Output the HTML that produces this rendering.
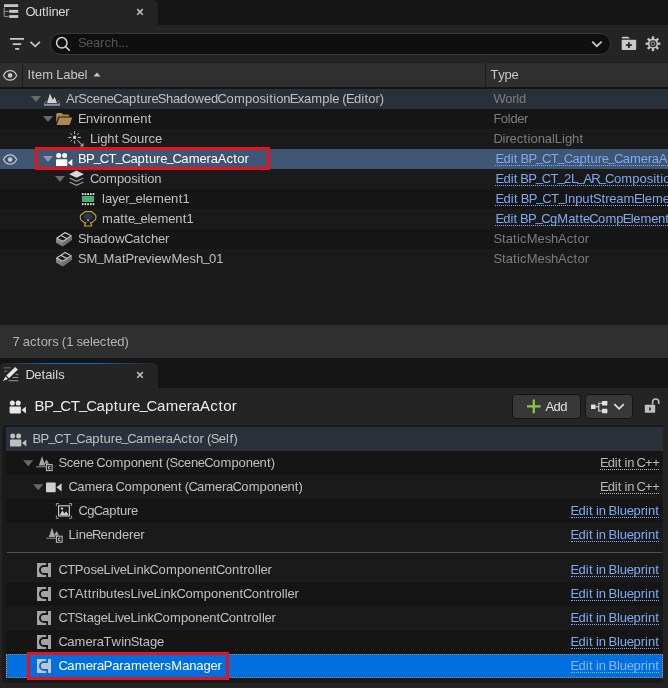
<!DOCTYPE html>
<html>
<head>
<meta charset="utf-8">
<style>
*{box-sizing:border-box;margin:0;padding:0}
html,body{width:668px;height:688px;overflow:hidden;background:#151515;font-family:"Liberation Sans",sans-serif;}
body{position:relative;color:#c0c0c0;font-size:13px;}
.abs{position:absolute}
.t{position:absolute;white-space:nowrap;line-height:16px;height:16px;transform-origin:0 50%}
.tr{position:absolute;white-space:nowrap;line-height:16px;height:16px;transform-origin:100% 50%}
svg{position:absolute;overflow:visible}
.k0{margin:0 -0.0152em;}
.k1{margin:0 0.0043em;}
.k2{margin:0 0.0034em;}
.k3{margin:0 -0.0086em;}
.k4{margin:0 -0.0074em;}
.k5{margin:0 0.0026em;}
.k6{margin:0 0.0026em;}
.k7{margin:0 0.0026em;}
.k8{margin:0 0.0026em;}
.k9{margin:0 -0.0073em;}
.k10{margin:0 -0.0222em;}
.k11{margin:0 -0.0357em;}
.k12{margin:0 -0.0332em;}
.k13{margin:0 -0.0493em;}
.k14{margin:0 -0.0291em;}
.k15{margin:0 -0.0030em;}
.k16{margin:0 -0.0091em;}
.k17{margin:0 0.0200em;}
.k18{margin:0 -0.0452em;}
.k19{margin:0 -0.0181em;}
.k20{margin:0 -0.0532em;}
.k21{margin:0 -0.0369em;}
.k22{margin:0 -0.0071em;}
.k23{margin:0 -0.0283em;}
.k24{margin:0 -0.0525em;position:relative;top:-0.11em;}
.k25{margin:0 -0.0062em;}
.k26{margin:0 0.0024em;}
.k27{margin:0 0.0117em;}
.k28{margin:0 0.0039em;}
.k29{margin:0 -0.0132em;}
.k30{margin:0 0.0346em;}
.k31{margin:0 0.0024em;}
.k32{margin:0 -0.0027em;}
.k33{margin:0 0.0102em;}
.k34{margin:0 0.0034em;}
.k35{margin:0 0.0102em;}
.k36{margin:0 0.0217em;}
.k37{margin:0 -0.0022em;}
.k38{margin:0 0.0070em;}
.k39{margin:0 0.0024em;}
.k40{margin:0 0.0026em;}
.k41{margin:0 0.0078em;}
.k42{margin:0 0.0243em;}
.k43{margin:0 -0.0025em;}
.k44{margin:0 -0.0078em;}
.k45{margin:0 0.0146em;}
.k46{margin:0 -0.0022em;}
.k47{margin:0 -0.0134em;}
.row{position:absolute;left:0;width:668px;height:20px}

.u{position:absolute;height:0;border-top:1px dotted #7eaaf2}
.drow{position:absolute;left:6px;width:657px;height:24px}
</style>
</head>
<body>

<div class="abs" style="left:0px;top:0px;width:668px;height:25px;background:#151515;"></div>
<div class="abs" style="left:0px;top:0px;width:158px;height:25px;background:#242424;border-radius:0 5px 0 0"></div>
<div class="abs" style="left:0px;top:25px;width:668px;height:38px;background:#242424;"></div>
<div class="abs" style="left:50px;top:33px;width:561px;height:22px;background:#0f0f0f;border:1px solid #363636;border-radius:11px"></div>
<div class="abs" style="left:0px;top:63px;width:668px;height:24px;background:#2f2f2f;"></div>
<div class="abs" style="left:22px;top:63px;width:1px;height:24px;background:#1a1a1a;"></div>
<div class="abs" style="left:485px;top:63px;width:1px;height:24px;background:#1a1a1a;"></div>
<div class="abs" style="left:0px;top:87px;width:668px;height:2px;background:#151515;"></div>
<div class="abs" style="left:0px;top:89px;width:668px;height:236px;background:#1a1a1a;"></div>
<div class="row" style="top:89px;background:#29303a"></div>
<div class="row" style="top:109px;background:#151515"></div>
<div class="row" style="top:129px;background:#1a1a1a"></div>
<div class="row" style="top:149px;background:#3e5573"></div>
<div class="row" style="top:169px;background:#1a1a1a"></div>
<div class="row" style="top:189px;background:#151515"></div>
<div class="row" style="top:209px;background:#1a1a1a"></div>
<div class="row" style="top:229px;background:#151515"></div>
<div class="row" style="top:249px;background:#1a1a1a"></div>
<div class="abs" style="left:0px;top:325px;width:668px;height:33px;background:#2f2f2f;"></div>
<div class="abs" style="left:0px;top:358px;width:668px;height:30px;background:#151515;"></div>
<div class="abs" style="left:0px;top:363px;width:158px;height:25px;background:#242424;border-radius:4px 5px 0 0"></div>
<div class="abs" style="left:4px;top:363px;width:150px;height:1px;background:linear-gradient(90deg,rgba(24,110,215,0) 0%,rgba(24,110,215,.9) 30%,rgba(24,110,215,.9) 60%,rgba(24,110,215,0) 100%);"></div>
<div class="abs" style="left:0px;top:388px;width:668px;height:300px;background:#242424;"></div>
<div class="abs" style="left:2px;top:425px;width:661px;height:258px;background:#1a1a1a;border-radius:4px 0 0 4px"></div>
<div class="drow" style="top:427px;background:#2b313b"></div>
<div class="drow" style="top:451px;background:#151515"></div>
<div class="drow" style="top:475px;background:#1a1a1a"></div>
<div class="drow" style="top:499px;background:#151515"></div>
<div class="drow" style="top:523px;background:#1a1a1a"></div>
<div class="drow" style="top:558px;background:#1a1a1a"></div>
<div class="drow" style="top:582px;background:#151515"></div>
<div class="drow" style="top:606px;background:#1a1a1a"></div>
<div class="drow" style="top:630px;background:#151515"></div>
<div class="drow" style="top:654px;background:#0070e0"></div>
<div class="abs" style="left:7px;top:552px;width:655px;height:1px;background:#505050;"></div>
<div class="abs" style="left:512px;top:394px;width:69px;height:25px;background:#383838;border:1px solid #151515;border-radius:4px"></div>
<div class="abs" style="left:585px;top:394px;width:48px;height:25px;background:#383838;border:1px solid #151515;border-radius:4px"></div>
<div class="u" style="left:495px;top:165px;width:173px"></div>
<div class="u" style="left:495px;top:185px;width:173px"></div>
<div class="u" style="left:495px;top:205px;width:173px"></div>
<div class="u" style="left:495px;top:225px;width:173px"></div>
<div class="u" style="left:600px;top:469px;width:59px;border-color:#b8b8b8"></div>
<div class="u" style="left:600px;top:493px;width:59px;border-color:#b8b8b8"></div>
<div class="u" style="left:571px;top:517px;width:88px"></div>
<div class="u" style="left:571px;top:541px;width:88px"></div>
<div class="u" style="left:571px;top:576px;width:88px"></div>
<div class="u" style="left:571px;top:600px;width:88px"></div>
<div class="u" style="left:571px;top:624px;width:88px"></div>
<div class="u" style="left:571px;top:648px;width:88px"></div>
<div class="u" style="left:571px;top:672px;width:88px;border-color:#8db4ee"></div>
<div id="tx" style="position:absolute;left:0;top:0;width:668px;height:688px;will-change:transform">
<div class="t" style="top:3.5px;color:#d8d8d8;letter-spacing:-0.243px;left:26.09px;"><span class="k18">O</span><span class="k43">u</span><span class="k42">t</span><span class="k35">l</span><span class="k33">i</span><span class="k37">n</span><span class="k29">e</span><span class="k40">r</span></div>
<div class="t" style="top:34.5px;color:#545454;letter-spacing:-0.051px;left:78.48px;"><span class="k21">S</span><span class="k29">e</span><span class="k25">a</span><span class="k40">r</span><span class="k27">c</span><span class="k32">h</span><span class="k4">.</span><span class="k4">.</span><span class="k4">.</span></div>
<div class="t" style="top:66.5px;color:#c6c6c6;letter-spacing:-0.090px;left:27.54px;"><span class="k15">I</span><span class="k42">t</span><span class="k29">e</span><span class="k36">m</span><span class="k0"> </span><span class="k16">L</span><span class="k25">a</span><span class="k26">b</span><span class="k29">e</span><span class="k35">l</span></div>
<div class="t" style="top:66.5px;color:#c6c6c6;letter-spacing:-0.047px;left:490.59px;"><span class="k22">T</span><span class="k47">y</span><span class="k39">p</span><span class="k29">e</span></div>
<div class="t" style="top:90.5px;color:#c0c0c0;letter-spacing:-0.129px;left:66.10px;"><span class="k9">A</span><span class="k40">r</span><span class="k21">S</span><span class="k27">c</span><span class="k29">e</span><span class="k37">n</span><span class="k29">e</span><span class="k11">C</span><span class="k25">a</span><span class="k39">p</span><span class="k42">t</span><span class="k43">u</span><span class="k40">r</span><span class="k29">e</span><span class="k21">S</span><span class="k32">h</span><span class="k25">a</span><span class="k28">d</span><span class="k38">o</span><span class="k45">w</span><span class="k29">e</span><span class="k28">d</span><span class="k11">C</span><span class="k38">o</span><span class="k36">m</span><span class="k39">p</span><span class="k38">o</span><span class="k41">s</span><span class="k33">i</span><span class="k42">t</span><span class="k33">i</span><span class="k38">o</span><span class="k37">n</span><span class="k13">E</span><span class="k46">x</span><span class="k25">a</span><span class="k36">m</span><span class="k39">p</span><span class="k35">l</span><span class="k29">e</span><span class="k0"> </span><span class="k1">(</span><span class="k13">E</span><span class="k28">d</span><span class="k33">i</span><span class="k42">t</span><span class="k38">o</span><span class="k40">r</span><span class="k2">)</span></div>
<div class="t" style="top:110.5px;color:#c0c0c0;letter-spacing:0.017px;left:78.64px;"><span class="k13">E</span><span class="k37">n</span><span class="k44">v</span><span class="k33">i</span><span class="k40">r</span><span class="k38">o</span><span class="k37">n</span><span class="k36">m</span><span class="k29">e</span><span class="k37">n</span><span class="k42">t</span></div>
<div class="t" style="top:130.5px;color:#c0c0c0;letter-spacing:-0.045px;left:90.12px;"><span class="k16">L</span><span class="k33">i</span><span class="k31">g</span><span class="k32">h</span><span class="k42">t</span><span class="k0"> </span><span class="k21">S</span><span class="k38">o</span><span class="k43">u</span><span class="k40">r</span><span class="k27">c</span><span class="k29">e</span></div>
<div class="t" style="top:150.5px;color:#ffffff;letter-spacing:-0.085px;left:78.29px;"><span class="k10">B</span><span class="k19">P</span><span class="k24">_</span><span class="k11">C</span><span class="k22">T</span><span class="k24">_</span><span class="k11">C</span><span class="k25">a</span><span class="k39">p</span><span class="k42">t</span><span class="k43">u</span><span class="k40">r</span><span class="k29">e</span><span class="k24">_</span><span class="k11">C</span><span class="k25">a</span><span class="k36">m</span><span class="k29">e</span><span class="k40">r</span><span class="k25">a</span><span class="k9">A</span><span class="k27">c</span><span class="k42">t</span><span class="k38">o</span><span class="k40">r</span></div>
<div class="t" style="top:170.5px;color:#c0c0c0;letter-spacing:-0.275px;left:90.46px;"><span class="k11">C</span><span class="k38">o</span><span class="k36">m</span><span class="k39">p</span><span class="k38">o</span><span class="k41">s</span><span class="k33">i</span><span class="k42">t</span><span class="k33">i</span><span class="k38">o</span><span class="k37">n</span></div>
<div class="t" style="top:190.5px;color:#c0c0c0;letter-spacing:0.026px;left:101.87px;"><span class="k35">l</span><span class="k25">a</span><span class="k47">y</span><span class="k29">e</span><span class="k40">r</span><span class="k24">_</span><span class="k29">e</span><span class="k35">l</span><span class="k29">e</span><span class="k36">m</span><span class="k29">e</span><span class="k37">n</span><span class="k42">t</span><span class="k6">1</span></div>
<div class="t" style="top:210.5px;color:#c0c0c0;letter-spacing:-0.143px;left:101.72px;"><span class="k36">m</span><span class="k25">a</span><span class="k42">t</span><span class="k42">t</span><span class="k29">e</span><span class="k24">_</span><span class="k29">e</span><span class="k35">l</span><span class="k29">e</span><span class="k36">m</span><span class="k29">e</span><span class="k37">n</span><span class="k42">t</span><span class="k6">1</span></div>
<div class="t" style="top:230.5px;color:#c0c0c0;letter-spacing:-0.047px;left:78.48px;"><span class="k21">S</span><span class="k32">h</span><span class="k25">a</span><span class="k28">d</span><span class="k38">o</span><span class="k45">w</span><span class="k11">C</span><span class="k25">a</span><span class="k42">t</span><span class="k27">c</span><span class="k32">h</span><span class="k29">e</span><span class="k40">r</span></div>
<div class="t" style="top:250.5px;color:#c0c0c0;letter-spacing:-0.049px;left:78.48px;"><span class="k21">S</span><span class="k17">M</span><span class="k24">_</span><span class="k17">M</span><span class="k25">a</span><span class="k42">t</span><span class="k19">P</span><span class="k40">r</span><span class="k29">e</span><span class="k44">v</span><span class="k33">i</span><span class="k29">e</span><span class="k45">w</span><span class="k17">M</span><span class="k29">e</span><span class="k41">s</span><span class="k32">h</span><span class="k24">_</span><span class="k5">0</span><span class="k6">1</span></div>
<div class="t" style="top:90.5px;color:#7c7c7c;letter-spacing:-0.332px;left:493.87px;"><span class="k23">W</span><span class="k38">o</span><span class="k40">r</span><span class="k35">l</span><span class="k28">d</span></div>
<div class="t" style="top:110.5px;color:#7c7c7c;letter-spacing:-0.378px;left:493.88px;"><span class="k14">F</span><span class="k38">o</span><span class="k35">l</span><span class="k28">d</span><span class="k29">e</span><span class="k40">r</span></div>
<div class="t" style="top:130.5px;color:#7c7c7c;letter-spacing:-0.090px;left:493.93px;"><span class="k12">D</span><span class="k33">i</span><span class="k40">r</span><span class="k29">e</span><span class="k27">c</span><span class="k42">t</span><span class="k33">i</span><span class="k38">o</span><span class="k37">n</span><span class="k25">a</span><span class="k35">l</span><span class="k16">L</span><span class="k33">i</span><span class="k31">g</span><span class="k32">h</span><span class="k42">t</span></div>
<div class="t" style="top:230.5px;color:#7c7c7c;letter-spacing:-0.119px;left:493.98px;"><span class="k21">S</span><span class="k42">t</span><span class="k25">a</span><span class="k42">t</span><span class="k33">i</span><span class="k27">c</span><span class="k17">M</span><span class="k29">e</span><span class="k41">s</span><span class="k32">h</span><span class="k9">A</span><span class="k27">c</span><span class="k42">t</span><span class="k38">o</span><span class="k40">r</span></div>
<div class="t" style="top:250.5px;color:#7c7c7c;letter-spacing:-0.119px;left:493.98px;"><span class="k21">S</span><span class="k42">t</span><span class="k25">a</span><span class="k42">t</span><span class="k33">i</span><span class="k27">c</span><span class="k17">M</span><span class="k29">e</span><span class="k41">s</span><span class="k32">h</span><span class="k9">A</span><span class="k27">c</span><span class="k42">t</span><span class="k38">o</span><span class="k40">r</span></div>
<div class="t" style="top:150.5px;color:#7eaaf2;letter-spacing:-0.155px;left:496.14px;"><span class="k13">E</span><span class="k28">d</span><span class="k33">i</span><span class="k42">t</span><span class="k0"> </span><span class="k10">B</span><span class="k19">P</span><span class="k24">_</span><span class="k11">C</span><span class="k22">T</span><span class="k24">_</span><span class="k11">C</span><span class="k25">a</span><span class="k39">p</span><span class="k42">t</span><span class="k43">u</span><span class="k40">r</span><span class="k29">e</span><span class="k24">_</span><span class="k11">C</span><span class="k25">a</span><span class="k36">m</span><span class="k29">e</span><span class="k40">r</span><span class="k25">a</span><span class="k9">A</span><span class="k27">c</span><span class="k42">t</span><span class="k38">o</span><span class="k40">r</span></div>
<div class="t" style="top:170.5px;color:#7eaaf2;letter-spacing:-0.181px;left:496.14px;"><span class="k13">E</span><span class="k28">d</span><span class="k33">i</span><span class="k42">t</span><span class="k0"> </span><span class="k10">B</span><span class="k19">P</span><span class="k24">_</span><span class="k11">C</span><span class="k22">T</span><span class="k24">_</span><span class="k7">2</span><span class="k16">L</span><span class="k24">_</span><span class="k9">A</span><span class="k20">R</span><span class="k24">_</span><span class="k11">C</span><span class="k38">o</span><span class="k36">m</span><span class="k39">p</span><span class="k38">o</span><span class="k41">s</span><span class="k33">i</span><span class="k42">t</span><span class="k33">i</span><span class="k38">o</span><span class="k37">n</span></div>
<div class="t" style="top:190.5px;color:#7eaaf2;letter-spacing:-0.119px;left:496.14px;"><span class="k13">E</span><span class="k28">d</span><span class="k33">i</span><span class="k42">t</span><span class="k0"> </span><span class="k10">B</span><span class="k19">P</span><span class="k24">_</span><span class="k11">C</span><span class="k22">T</span><span class="k24">_</span><span class="k15">I</span><span class="k37">n</span><span class="k39">p</span><span class="k43">u</span><span class="k42">t</span><span class="k21">S</span><span class="k42">t</span><span class="k40">r</span><span class="k29">e</span><span class="k25">a</span><span class="k36">m</span><span class="k13">E</span><span class="k35">l</span><span class="k29">e</span><span class="k36">m</span><span class="k29">e</span><span class="k37">n</span><span class="k42">t</span></div>
<div class="t" style="top:210.5px;color:#7eaaf2;letter-spacing:-0.234px;left:496.14px;"><span class="k13">E</span><span class="k28">d</span><span class="k33">i</span><span class="k42">t</span><span class="k0"> </span><span class="k10">B</span><span class="k19">P</span><span class="k24">_</span><span class="k11">C</span><span class="k31">g</span><span class="k17">M</span><span class="k25">a</span><span class="k42">t</span><span class="k42">t</span><span class="k29">e</span><span class="k11">C</span><span class="k38">o</span><span class="k36">m</span><span class="k39">p</span><span class="k13">E</span><span class="k35">l</span><span class="k29">e</span><span class="k36">m</span><span class="k29">e</span><span class="k37">n</span><span class="k42">t</span></div>
<div class="t" style="top:333.5px;color:#b4b4b4;letter-spacing:-0.112px;left:12.47px;"><span class="k8">7</span><span class="k0"> </span><span class="k25">a</span><span class="k27">c</span><span class="k42">t</span><span class="k38">o</span><span class="k40">r</span><span class="k41">s</span><span class="k0"> </span><span class="k1">(</span><span class="k6">1</span><span class="k0"> </span><span class="k41">s</span><span class="k29">e</span><span class="k35">l</span><span class="k29">e</span><span class="k27">c</span><span class="k42">t</span><span class="k29">e</span><span class="k28">d</span><span class="k2">)</span></div>
<div class="t" style="top:366.5px;color:#d8d8d8;letter-spacing:-0.128px;left:25.93px;"><span class="k12">D</span><span class="k29">e</span><span class="k42">t</span><span class="k25">a</span><span class="k33">i</span><span class="k35">l</span><span class="k41">s</span></div>
<div class="t" style="top:396.8px;color:#ececec;font-size:15px;line-height:18px;height:18px;letter-spacing:0.126px;left:34.83px;"><span class="k10">B</span><span class="k19">P</span><span class="k24">_</span><span class="k11">C</span><span class="k22">T</span><span class="k24">_</span><span class="k11">C</span><span class="k25">a</span><span class="k39">p</span><span class="k42">t</span><span class="k43">u</span><span class="k40">r</span><span class="k29">e</span><span class="k24">_</span><span class="k11">C</span><span class="k25">a</span><span class="k36">m</span><span class="k29">e</span><span class="k40">r</span><span class="k25">a</span><span class="k9">A</span><span class="k27">c</span><span class="k42">t</span><span class="k38">o</span><span class="k40">r</span></div>
<div class="t" style="top:398.5px;color:#e0e0e0;letter-spacing:-0.570px;left:545.60px;"><span class="k9">A</span><span class="k28">d</span><span class="k28">d</span></div>
<div class="t" style="top:430.5px;color:#c0c0c0;letter-spacing:-0.062px;left:32.79px;"><span class="k10">B</span><span class="k19">P</span><span class="k24">_</span><span class="k11">C</span><span class="k22">T</span><span class="k24">_</span><span class="k11">C</span><span class="k25">a</span><span class="k39">p</span><span class="k42">t</span><span class="k43">u</span><span class="k40">r</span><span class="k29">e</span><span class="k24">_</span><span class="k11">C</span><span class="k25">a</span><span class="k36">m</span><span class="k29">e</span><span class="k40">r</span><span class="k25">a</span><span class="k9">A</span><span class="k27">c</span><span class="k42">t</span><span class="k38">o</span><span class="k40">r</span><span class="k0"> </span><span class="k1">(</span><span class="k21">S</span><span class="k29">e</span><span class="k35">l</span><span class="k30">f</span><span class="k2">)</span></div>
<div class="t" style="top:454.5px;color:#c0c0c0;letter-spacing:-0.177px;left:58.98px;"><span class="k21">S</span><span class="k27">c</span><span class="k29">e</span><span class="k37">n</span><span class="k29">e</span><span class="k0"> </span><span class="k11">C</span><span class="k38">o</span><span class="k36">m</span><span class="k39">p</span><span class="k38">o</span><span class="k37">n</span><span class="k29">e</span><span class="k37">n</span><span class="k42">t</span><span class="k0"> </span><span class="k1">(</span><span class="k21">S</span><span class="k27">c</span><span class="k29">e</span><span class="k37">n</span><span class="k29">e</span><span class="k11">C</span><span class="k38">o</span><span class="k36">m</span><span class="k39">p</span><span class="k38">o</span><span class="k37">n</span><span class="k29">e</span><span class="k37">n</span><span class="k42">t</span><span class="k2">)</span></div>
<div class="t" style="top:478.5px;color:#c0c0c0;letter-spacing:-0.216px;left:68.96px;"><span class="k11">C</span><span class="k25">a</span><span class="k36">m</span><span class="k29">e</span><span class="k40">r</span><span class="k25">a</span><span class="k0"> </span><span class="k11">C</span><span class="k38">o</span><span class="k36">m</span><span class="k39">p</span><span class="k38">o</span><span class="k37">n</span><span class="k29">e</span><span class="k37">n</span><span class="k42">t</span><span class="k0"> </span><span class="k1">(</span><span class="k11">C</span><span class="k25">a</span><span class="k36">m</span><span class="k29">e</span><span class="k40">r</span><span class="k25">a</span><span class="k11">C</span><span class="k38">o</span><span class="k36">m</span><span class="k39">p</span><span class="k38">o</span><span class="k37">n</span><span class="k29">e</span><span class="k37">n</span><span class="k42">t</span><span class="k2">)</span></div>
<div class="t" style="top:502.5px;color:#c0c0c0;letter-spacing:-0.291px;left:78.96px;"><span class="k11">C</span><span class="k31">g</span><span class="k11">C</span><span class="k25">a</span><span class="k39">p</span><span class="k42">t</span><span class="k43">u</span><span class="k40">r</span><span class="k29">e</span></div>
<div class="t" style="top:526.5px;color:#c0c0c0;letter-spacing:-0.037px;left:68.62px;"><span class="k16">L</span><span class="k33">i</span><span class="k37">n</span><span class="k29">e</span><span class="k20">R</span><span class="k29">e</span><span class="k37">n</span><span class="k28">d</span><span class="k29">e</span><span class="k40">r</span><span class="k29">e</span><span class="k40">r</span></div>
<div class="t" style="top:561.5px;color:#c0c0c0;letter-spacing:-0.126px;left:58.96px;"><span class="k11">C</span><span class="k22">T</span><span class="k19">P</span><span class="k38">o</span><span class="k41">s</span><span class="k29">e</span><span class="k16">L</span><span class="k33">i</span><span class="k44">v</span><span class="k29">e</span><span class="k16">L</span><span class="k33">i</span><span class="k37">n</span><span class="k34">k</span><span class="k11">C</span><span class="k38">o</span><span class="k36">m</span><span class="k39">p</span><span class="k38">o</span><span class="k37">n</span><span class="k29">e</span><span class="k37">n</span><span class="k42">t</span><span class="k11">C</span><span class="k38">o</span><span class="k37">n</span><span class="k42">t</span><span class="k40">r</span><span class="k38">o</span><span class="k35">l</span><span class="k35">l</span><span class="k29">e</span><span class="k40">r</span></div>
<div class="t" style="top:585.5px;color:#c0c0c0;letter-spacing:-0.123px;left:58.96px;"><span class="k11">C</span><span class="k22">T</span><span class="k9">A</span><span class="k42">t</span><span class="k42">t</span><span class="k40">r</span><span class="k33">i</span><span class="k26">b</span><span class="k43">u</span><span class="k42">t</span><span class="k29">e</span><span class="k41">s</span><span class="k16">L</span><span class="k33">i</span><span class="k44">v</span><span class="k29">e</span><span class="k16">L</span><span class="k33">i</span><span class="k37">n</span><span class="k34">k</span><span class="k11">C</span><span class="k38">o</span><span class="k36">m</span><span class="k39">p</span><span class="k38">o</span><span class="k37">n</span><span class="k29">e</span><span class="k37">n</span><span class="k42">t</span><span class="k11">C</span><span class="k38">o</span><span class="k37">n</span><span class="k42">t</span><span class="k40">r</span><span class="k38">o</span><span class="k35">l</span><span class="k35">l</span><span class="k29">e</span><span class="k40">r</span></div>
<div class="t" style="top:609.5px;color:#c0c0c0;letter-spacing:-0.124px;left:58.96px;"><span class="k11">C</span><span class="k22">T</span><span class="k21">S</span><span class="k42">t</span><span class="k25">a</span><span class="k31">g</span><span class="k29">e</span><span class="k16">L</span><span class="k33">i</span><span class="k44">v</span><span class="k29">e</span><span class="k16">L</span><span class="k33">i</span><span class="k37">n</span><span class="k34">k</span><span class="k11">C</span><span class="k38">o</span><span class="k36">m</span><span class="k39">p</span><span class="k38">o</span><span class="k37">n</span><span class="k29">e</span><span class="k37">n</span><span class="k42">t</span><span class="k11">C</span><span class="k38">o</span><span class="k37">n</span><span class="k42">t</span><span class="k40">r</span><span class="k38">o</span><span class="k35">l</span><span class="k35">l</span><span class="k29">e</span><span class="k40">r</span></div>
<div class="t" style="top:633.5px;color:#c0c0c0;letter-spacing:-0.109px;left:58.96px;"><span class="k11">C</span><span class="k25">a</span><span class="k36">m</span><span class="k29">e</span><span class="k40">r</span><span class="k25">a</span><span class="k22">T</span><span class="k45">w</span><span class="k33">i</span><span class="k37">n</span><span class="k21">S</span><span class="k42">t</span><span class="k25">a</span><span class="k31">g</span><span class="k29">e</span></div>
<div class="t" style="top:657.5px;color:#ffffff;letter-spacing:-0.047px;left:58.96px;"><span class="k11">C</span><span class="k25">a</span><span class="k36">m</span><span class="k29">e</span><span class="k40">r</span><span class="k25">a</span><span class="k19">P</span><span class="k25">a</span><span class="k40">r</span><span class="k25">a</span><span class="k36">m</span><span class="k29">e</span><span class="k42">t</span><span class="k29">e</span><span class="k40">r</span><span class="k41">s</span><span class="k17">M</span><span class="k25">a</span><span class="k37">n</span><span class="k25">a</span><span class="k31">g</span><span class="k29">e</span><span class="k40">r</span></div>
<div class="t" style="top:454.5px;color:#b8b8b8;letter-spacing:-0.319px;right:8.71px;"><span class="k13">E</span><span class="k28">d</span><span class="k33">i</span><span class="k42">t</span><span class="k0"> </span><span class="k33">i</span><span class="k37">n</span><span class="k0"> </span><span class="k11">C</span><span class="k3">+</span><span class="k3">+</span></div>
<div class="t" style="top:478.5px;color:#b8b8b8;letter-spacing:-0.319px;right:8.71px;"><span class="k13">E</span><span class="k28">d</span><span class="k33">i</span><span class="k42">t</span><span class="k0"> </span><span class="k33">i</span><span class="k37">n</span><span class="k0"> </span><span class="k11">C</span><span class="k3">+</span><span class="k3">+</span></div>
<div class="t" style="top:502.5px;color:#7eaaf2;letter-spacing:-0.160px;right:8.98px;"><span class="k13">E</span><span class="k28">d</span><span class="k33">i</span><span class="k42">t</span><span class="k0"> </span><span class="k33">i</span><span class="k37">n</span><span class="k0"> </span><span class="k10">B</span><span class="k35">l</span><span class="k43">u</span><span class="k29">e</span><span class="k39">p</span><span class="k40">r</span><span class="k33">i</span><span class="k37">n</span><span class="k42">t</span></div>
<div class="t" style="top:526.5px;color:#7eaaf2;letter-spacing:-0.160px;right:8.98px;"><span class="k13">E</span><span class="k28">d</span><span class="k33">i</span><span class="k42">t</span><span class="k0"> </span><span class="k33">i</span><span class="k37">n</span><span class="k0"> </span><span class="k10">B</span><span class="k35">l</span><span class="k43">u</span><span class="k29">e</span><span class="k39">p</span><span class="k40">r</span><span class="k33">i</span><span class="k37">n</span><span class="k42">t</span></div>
<div class="t" style="top:561.5px;color:#7eaaf2;letter-spacing:-0.160px;right:8.98px;"><span class="k13">E</span><span class="k28">d</span><span class="k33">i</span><span class="k42">t</span><span class="k0"> </span><span class="k33">i</span><span class="k37">n</span><span class="k0"> </span><span class="k10">B</span><span class="k35">l</span><span class="k43">u</span><span class="k29">e</span><span class="k39">p</span><span class="k40">r</span><span class="k33">i</span><span class="k37">n</span><span class="k42">t</span></div>
<div class="t" style="top:585.5px;color:#7eaaf2;letter-spacing:-0.160px;right:8.98px;"><span class="k13">E</span><span class="k28">d</span><span class="k33">i</span><span class="k42">t</span><span class="k0"> </span><span class="k33">i</span><span class="k37">n</span><span class="k0"> </span><span class="k10">B</span><span class="k35">l</span><span class="k43">u</span><span class="k29">e</span><span class="k39">p</span><span class="k40">r</span><span class="k33">i</span><span class="k37">n</span><span class="k42">t</span></div>
<div class="t" style="top:609.5px;color:#7eaaf2;letter-spacing:-0.160px;right:8.98px;"><span class="k13">E</span><span class="k28">d</span><span class="k33">i</span><span class="k42">t</span><span class="k0"> </span><span class="k33">i</span><span class="k37">n</span><span class="k0"> </span><span class="k10">B</span><span class="k35">l</span><span class="k43">u</span><span class="k29">e</span><span class="k39">p</span><span class="k40">r</span><span class="k33">i</span><span class="k37">n</span><span class="k42">t</span></div>
<div class="t" style="top:633.5px;color:#7eaaf2;letter-spacing:-0.160px;right:8.98px;"><span class="k13">E</span><span class="k28">d</span><span class="k33">i</span><span class="k42">t</span><span class="k0"> </span><span class="k33">i</span><span class="k37">n</span><span class="k0"> </span><span class="k10">B</span><span class="k35">l</span><span class="k43">u</span><span class="k29">e</span><span class="k39">p</span><span class="k40">r</span><span class="k33">i</span><span class="k37">n</span><span class="k42">t</span></div>
<div class="t" style="top:657.5px;color:#8db4ee;letter-spacing:-0.160px;right:8.98px;"><span class="k13">E</span><span class="k28">d</span><span class="k33">i</span><span class="k42">t</span><span class="k0"> </span><span class="k33">i</span><span class="k37">n</span><span class="k0"> </span><span class="k10">B</span><span class="k35">l</span><span class="k43">u</span><span class="k29">e</span><span class="k39">p</span><span class="k40">r</span><span class="k33">i</span><span class="k37">n</span><span class="k42">t</span></div>
</div>
<svg style="left:0;top:0" width="668" height="688" viewBox="0 0 668 688">
<defs>
<path id="tri" d="M0 0H10L5 6Z"/>
<g id="cam"><circle cx="2.7" cy="2.5" r="2.5"/><circle cx="8.6" cy="2.5" r="2.5"/><rect x="0" y="6.2" width="11.3" height="6.8" rx="0.9"/><path d="M12 9.7L16.3 6.1V13Z"/></g>
<g id="mesh"><path d="M0.2 6.4L7.1 10.2V14.7L0.2 10.9Z" fill="#848484"/><path d="M7.1 10.2L16.2 4V8.2L7.1 14.7Z" fill="#707070"/><path d="M0.9 6.4L9.2 0.8L15.4 4L7.1 9.6ZM4.9 3.5L11.4 6.9" fill="none" stroke="#c4c4c4" stroke-width="1.2" stroke-linejoin="round"/></g>
<mask id="cm"><rect width="14.2" height="14.2" fill="#fff"/><path d="M10.2 -1V3.05H7.1A4.05 4.05 0 0 0 7.1 11.15H10.2V15.2" stroke="#000" stroke-width="1.9" fill="none"/></mask><g id="cicon"><rect width="14.2" height="14.2" mask="url(#cm)"/></g>
<g id="scene"><path d="M2.2 9.3L5.4 0L8.6 9.3Z" fill="#a6a6a6"/><path d="M7.4 7.6L10 3.3L12.4 7.6Z" fill="#a6a6a6"/><rect x="-0.4" y="9.8" width="9.9" height="1.4" fill="#707070"/><rect x="9.8" y="8.4" width="5.7" height="6" fill="#1a1a1a" stroke="#c4c4c4" stroke-width="1"/><path d="M13.8 10.3H11.9V12.6H13.8" fill="none" stroke="#c4c4c4" stroke-width="1"/></g>
<path id="chev" d="M0 0L4.7 4.6L9.4 0" fill="none" stroke-width="1.7"/>
<g id="x"><path d="M0.5 0.5L6.1 6.1M6.1 0.5L0.5 6.1" stroke="#c0c0c0" stroke-width="1.5"/></g>
<g id="eye" fill="none" stroke="#c8c8c8" stroke-width="1.2"><path d="M0.6 5.3C3.6 -1 10.8 -1 13.8 5.3C10.8 11.6 3.6 11.6 0.6 5.3Z"/><circle cx="7.2" cy="5.3" r="2.3" fill="#c8c8c8" stroke="none"/></g>
</defs>

<!-- outliner tab icon -->
<g fill="#c8c8c8"><rect x="4" y="4.2" width="14.2" height="2.8"/><rect x="9.2" y="9.9" width="9" height="2.9"/><rect x="9.2" y="15.1" width="9" height="2.8"/><path d="M4.2 7.4V16.6H8.6M4.2 11.4H8.6" fill="none" stroke="#a0a0a0" stroke-width="0.9"/></g>
<use href="#x" x="136.7" y="8.6"/>
<!-- filter -->
<g stroke="#c8c8c8" stroke-width="1.8"><path d="M10 38.8H24M12.8 44.2H21.2M15.2 48.8H19.2"/></g>
<use href="#chev" x="30.5" y="41.8" stroke="#c8c8c8"/>
<!-- magnifier -->
<g fill="none" stroke="#d0d0d0" stroke-width="1.5"><circle cx="61.8" cy="42.8" r="5.2"/><path d="M65.6 46.6L69.8 50.8"/></g>
<use href="#chev" x="592.2" y="41.6" stroke="#c8c8c8"/>
<!-- folder plus -->
<g fill="#c8c8c8"><path d="M621.7 38.2Q621.7 36.8 623 36.8H627.6Q628.6 36.8 629.2 37.8L629.8 38.6H621.7Z"/><rect x="621.7" y="39.8" width="14.5" height="10.3" rx="1"/></g>
<path d="M628.9 42.2V48M626 45.1H631.8" stroke="#242424" stroke-width="1.8"/>
<!-- gear -->
<g transform="translate(653 43.7)"><g fill="#c4c4c4"><rect x="-1.15" y="-7.4" width="2.3" height="14.8" transform="rotate(0)"/><rect x="-1.15" y="-7.4" width="2.3" height="14.8" transform="rotate(45)"/><rect x="-1.15" y="-7.4" width="2.3" height="14.8" transform="rotate(90)"/><rect x="-1.15" y="-7.4" width="2.3" height="14.8" transform="rotate(135)"/><circle r="5.1"/></g><circle r="3.5" fill="#242424"/><circle r="2.4" fill="#8c8c8c"/><circle r="1.2" fill="#242424"/></g>
<!-- header eye & sort arrow -->
<use href="#eye" x="2.9" y="70.1"/>
<path d="M93.5 76.4L97 72.4L100.5 76.4Z" fill="#c8c8c8"/>

<!-- row 0 world -->
<use href="#tri" x="31" y="96.1" fill="#696969"/>
<path d="M47 102.9L50 93.5L52.7 99.7L54.7 97L57 102.9Z" fill="#d2d2d2"/><path d="M44.4 103.8L46.4 100.2M59.8 103.8L58 100.2" stroke="#7c838c" stroke-width="0.8"/><rect x="44" y="103.7" width="16.1" height="2.1" fill="#8b929b"/>
<!-- row 1 folder -->
<use href="#tri" x="43" y="116.1" fill="#696969"/>
<g fill="#ad8852"><path d="M56.2 114.4Q56.2 112.9 57.6 112.9H61.4L63.2 114.6H68Q69.3 114.6 69.3 115.8V116.6H59.4Q58.3 116.6 57.9 117.7L56.2 123Z"/><path d="M59.3 117.6H71.3Q72.3 117.6 71.9 118.6L69.9 124Q69.6 124.9 68.6 124.9H56.6Z"/></g>
<!-- row 2 light -->
<path d="M77.90 137.40L80.90 137.40M77.07 139.87L78.84 141.64M74.60 140.70L74.60 143.70M72.13 139.87L70.36 141.64M71.30 137.40L68.30 137.40M72.13 134.93L70.36 133.16M74.60 134.10L74.60 131.10M77.07 134.93L78.84 133.16" stroke="#c4c4c4" stroke-width="0.95" fill="none"/><rect x="73.0" y="135.8" width="3.2" height="3.2" rx="0.9" fill="#c8c8c8"/>
<path d="M78.2 141.2L82.6 145.6" stroke="#9a9a9a" stroke-width="1.1" fill="none"/><path d="M83.6 142.6V146.4H79.8Z" fill="#9a9a9a"/>
<!-- row 3 camera actor -->
<use href="#eye" x="2.9" y="154.2" stroke="#ffffff"/>
<use href="#tri" x="43" y="156.1" fill="#8b96a6"/>
<use href="#cam" x="56" y="153" fill="#ffffff"/>
<!-- row 4 composition -->
<use href="#tri" x="55" y="176.1" fill="#696969"/>
<path d="M76.5 170.6L83.8 174.2L76.5 177.8L69.2 174.2Z" fill="#d8d8d8"/>
<path d="M69.6 178L76.5 181.4L83.4 178M69.6 182L76.5 185.4L83.4 182" fill="none" stroke="#9a9a9a" stroke-width="1.2"/>
<!-- row 5 film -->
<rect x="80.9" y="191.9" width="14" height="13.9" fill="#040404"/>
<rect x="81.8" y="195.9" width="12.4" height="6.1" fill="#45ae6e"/>
<g fill="#e4e4e4"><rect x="81.8" y="193" width="1.7" height="2.1"/><rect x="84.5" y="193" width="1.7" height="2.1"/><rect x="87.2" y="193" width="1.7" height="2.1"/><rect x="89.9" y="193" width="1.7" height="2.1"/><rect x="92.6" y="193" width="1.7" height="2.1"/><rect x="81.8" y="203.1" width="1.7" height="2.1"/><rect x="84.5" y="203.1" width="1.7" height="2.1"/><rect x="87.2" y="203.1" width="1.7" height="2.1"/><rect x="89.9" y="203.1" width="1.7" height="2.1"/><rect x="92.6" y="203.1" width="1.7" height="2.1"/></g>
<!-- row 6 matte tree -->
<path d="M85.2 211.7H91.8L95.6 215.2Q96.6 217.4 95.4 219.6L91.8 222.6H90.6L91.7 226H84.5L85.6 222.6H84.4L80.8 219.6Q79.6 217.4 80.6 215.2Z" fill="#0c1744" stroke="#c9a70a" stroke-width="1.2" stroke-linejoin="round"/>
<ellipse cx="88.1" cy="216.9" rx="5" ry="3.5" fill="#2a3a42"/><rect x="87.2" y="219.4" width="1.9" height="1.9" fill="#c9a70a"/>
<!-- row 7,8 mesh -->
<use href="#mesh" x="55.8" y="231.8"/>
<use href="#mesh" x="55.8" y="251.7"/>

<!-- details tab -->
<g><path d="M15.2 366.9L17.9 369.6L9 378.2L6.3 375.5Z" fill="#e4e4e4"/><path d="M5.6 376.5L8 378.9L3 381.1Z" fill="#e4e4e4"/><path d="M3.9 367.9H10.9M3.9 371.2H7.4" stroke="#707070" stroke-width="1"/><path d="M15.7 374.4H18.3M12.6 377.5H18.3M8.7 380.7H18.3" stroke="#9a9a9a" stroke-width="1"/></g>
<use href="#x" x="136.7" y="371.6"/>
<use href="#cam" x="9.6" y="400.4" fill="#e8e8e8"/>
<!-- add button -->
<path d="M533.8 399.6V413.2M527 406.4H540.6" stroke="#8cc63f" stroke-width="2.2"/>
<!-- hierarchy -->
<g fill="#e0e0e0"><rect x="591" y="404.4" width="4.6" height="4.6" rx="0.6"/><rect x="602" y="401" width="5.4" height="4.4" rx="0.6"/><rect x="602" y="408.8" width="5.4" height="4.4" rx="0.6"/></g>
<path d="M595.6 406.7H598.8M602 403.2H598.8V411H602" fill="none" stroke="#e0e0e0" stroke-width="1.1"/>
<use href="#chev" x="614.4" y="404.2" stroke="#e0e0e0"/>
<!-- lock -->
<rect x="644.8" y="404.8" width="10.4" height="8" rx="0.8" fill="#c0c0c0"/>
<path d="M652.6 404.6V402.2A3 3 0 0 1 658.8 402.2V404" fill="none" stroke="#c0c0c0" stroke-width="1.5"/>
<rect x="649.2" y="407.4" width="1.6" height="3" fill="#242424"/>

<!-- tree -->
<use href="#cam" x="10" y="433.4" fill="#c0c0c0"/>
<use href="#tri" x="23.2" y="460.2" fill="#696969"/>
<use href="#scene" x="36.6" y="456.2"/>
<use href="#tri" x="33.2" y="484.2" fill="#696969"/>
<g fill="#d0d0d0"><rect x="46" y="482.4" width="9.7" height="9.8" rx="0.8"/><path d="M56.5 487.3L61.6 483.2V491.4Z"/></g>
<!-- cgcapture -->
<g fill="none" stroke="#8c8c8c" stroke-width="1.1"><path d="M56.4 506.2V503.6H59M69 503.6H71.6V506.2M71.6 515.6V518.2H69M59 518.2H56.4V515.6"/><rect x="58.6" y="505.8" width="10.8" height="10.2" fill="#1a1a1a" stroke="#d0d0d0"/></g>
<path d="M59.6 515.2L62.4 510.6L64.4 513.4L66.2 511.2L68.6 515.2Z" fill="#d0d0d0"/><circle cx="62" cy="508.6" r="1.2" fill="#d0d0d0"/>
<use href="#scene" x="46.6" y="527.8"/>
<use href="#cicon" x="36.9" y="562.9" fill="#a4a4a4"/>
<use href="#cicon" x="36.9" y="586.9" fill="#a4a4a4"/>
<use href="#cicon" x="36.9" y="610.9" fill="#a4a4a4"/>
<use href="#cicon" x="36.9" y="634.9" fill="#a4a4a4"/>
<use href="#cicon" x="36.9" y="658.9" fill="#c4c4c4"/>
</svg>
<div class="abs" style="left:6px;top:654px;width:657px;height:24px;border:1px dotted #d8901e;border-top-color:#b08a48;border-bottom-color:#b08a48"></div>

<div class="abs" style="left:35px;top:147px;width:235px;height:23px;border:3px solid #e3141c"></div>
<div class="abs" style="left:27px;top:652px;width:202px;height:28px;border:3px solid #e3141c"></div>
</body>
</html>
